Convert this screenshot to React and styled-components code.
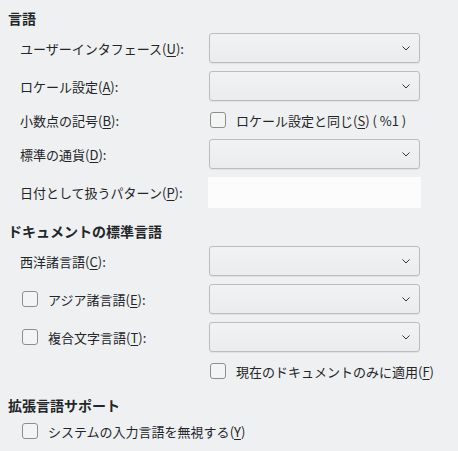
import styled, { createGlobalStyle } from "styled-components";

const GlobalStyle = createGlobalStyle`
  html, body {
    margin: 0;
    padding: 0;
    background: #eff0f1;
  }
  body {
    font-family: "Noto Sans CJK JP", "Noto Sans", sans-serif;
    font-size: 13px;
    color: #232629;
  }
`;

const Page = styled.div`
  width: 458px;
  height: 451px;
  box-sizing: border-box;
  padding: 8px 8px 0 8px;
  display: flex;
  flex-direction: column;
`;

const Heading = styled.div`
  height: 20px;
  line-height: 20px;
  font-size: 14px;
  font-weight: 700;
  margin-top: ${({ $top }) => $top || 0}px;
  margin-bottom: 5px;
`;

const Grid = styled.div`
  display: grid;
  grid-template-columns: 189px 211px;
  row-gap: 8px;
  padding-left: 12px;
`;

const Label = styled.div`
  display: flex;
  align-items: center;
  height: ${({ $h }) => $h || 30}px;
  white-space: nowrap;
`;

const CheckRow = styled.label`
  display: flex;
  align-items: center;
  gap: 10px;
  height: 22px;
  white-space: nowrap;
  padding-left: ${({ $indent }) => $indent || 0}px;
`;

const Box = styled.span`
  width: 16px;
  height: 16px;
  box-sizing: border-box;
  border: 1px solid #8c8e90;
  border-radius: 3px;
  background: #f3f4f4;
  flex: none;
`;

const Key = styled.span`
  text-decoration: underline;
  text-underline-offset: 2px;
`;

const Combo = styled.div`
  height: 30px;
  box-sizing: border-box;
  border: 1px solid #babcbe;
  border-radius: 3px;
  background: linear-gradient(#f1f2f3, #ebeced);
  box-shadow: 0 1px 1px rgba(0, 0, 0, 0.06);
  display: flex;
  align-items: center;
  justify-content: flex-end;
  padding-right: 9px;
`;

const TextField = styled.div`
  height: 31px;
  margin: 0 -1px;
  background: #fcfcfc;
`;

const Empty = styled.div``;

const Chevron = () => (
  <svg width="8" height="5" viewBox="0 0 8 5">
    <polyline points="0.5,0.5 4,4 7.5,0.5" fill="none" stroke="#31363b" strokeWidth="1" />
  </svg>
);

const Text = ({ text, k, tail = ":" }) => (
  <span>
    {text}(<Key>{k}</Key>){tail}
  </span>
);

const App = () => {
  return (
    <>
      <GlobalStyle />
      <Page>
        <Heading $top={0}>言語</Heading>
        <Grid>
          <Label>
            <Text text="ユーザーインタフェース" k="U" />
          </Label>
          <Combo>
            <Chevron />
          </Combo>

          <Label>
            <Text text="ロケール設定" k="A" />
          </Label>
          <Combo>
            <Chevron />
          </Combo>

          <Label $h={22}>
            <Text text="小数点の記号" k="B" />
          </Label>
          <CheckRow $indent={1}>
            <Box />
            <span>
              ロケール設定と同じ(<Key>S</Key>) ( %1 )
            </span>
          </CheckRow>

          <Label>
            <Text text="標準の通貨" k="D" />
          </Label>
          <Combo>
            <Chevron />
          </Combo>

          <Label>
            <Text text="日付として扱うパターン" k="P" />
          </Label>
          <TextField />
        </Grid>

        <Heading $top={13}>ドキュメントの標準言語</Heading>
        <Grid>
          <Label>
            <Text text="西洋諸言語" k="C" />
          </Label>
          <Combo>
            <Chevron />
          </Combo>

          <CheckRow $indent={2} style={{ height: 30 }}>
            <Box />
            <Text text="アジア諸言語" k="E" />
          </CheckRow>
          <Combo>
            <Chevron />
          </Combo>

          <CheckRow $indent={2} style={{ height: 30 }}>
            <Box />
            <Text text="複合文字言語" k="T" />
          </CheckRow>
          <Combo>
            <Chevron />
          </Combo>

          <Empty />
          <CheckRow $indent={1}>
            <Box />
            <Text text="現在のドキュメントのみに適用" k="F" tail="" />
          </CheckRow>
        </Grid>

        <Heading $top={13}>拡張言語サポート</Heading>
        <Grid>
          <CheckRow $indent={2}>
            <Box />
            <Text text="システムの入力言語を無視する" k="Y" tail="" />
          </CheckRow>
        </Grid>
      </Page>
    </>
  );
};

export default App;
